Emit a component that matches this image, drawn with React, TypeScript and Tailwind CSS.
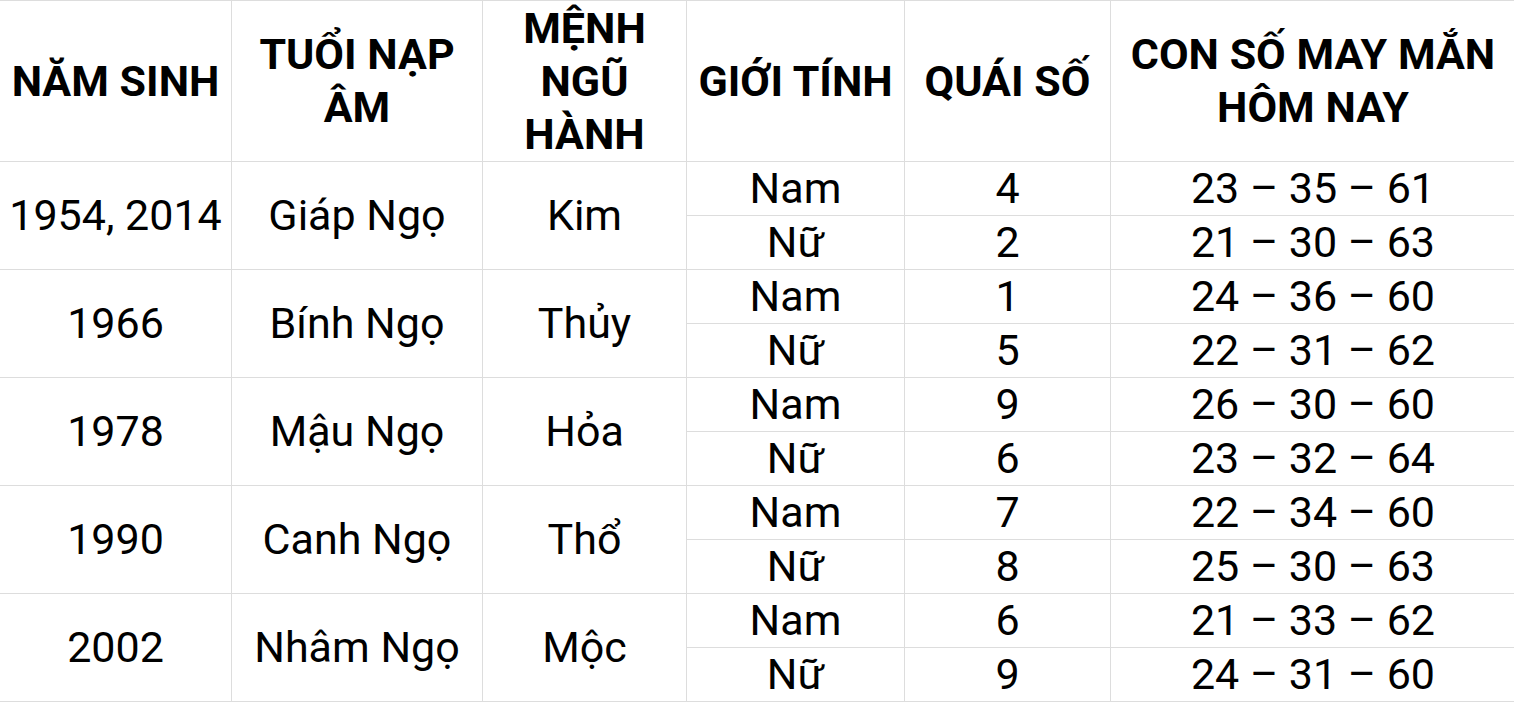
const rows = [
  { year: '1954, 2014', tuoi: 'Giáp Ngọ', menh: 'Kim', nam: ['4', '23 – 35 – 61'], nu: ['2', '21 – 30 – 63'] },
  { year: '1966', tuoi: 'Bính Ngọ', menh: 'Thủy', nam: ['1', '24 – 36 – 60'], nu: ['5', '22 – 31 – 62'] },
  { year: '1978', tuoi: 'Mậu Ngọ', menh: 'Hỏa', nam: ['9', '26 – 30 – 60'], nu: ['6', '23 – 32 – 64'] },
  { year: '1990', tuoi: 'Canh Ngọ', menh: 'Thổ', nam: ['7', '22 – 34 – 60'], nu: ['8', '25 – 30 – 63'] },
  { year: '2002', tuoi: 'Nhâm Ngọ', menh: 'Mộc', nam: ['6', '21 – 33 – 62'], nu: ['9', '24 – 31 – 60'] },
];

const th = 'border border-[#dddddd] px-1 py-0 font-bold text-center align-middle leading-[53px]';
const td = 'border border-[#dddddd] px-1 py-0 text-center align-middle h-[54px] leading-[53px]';

export default function App() {
  return (
    <div className="w-[1514px] h-[703px] overflow-hidden bg-white text-black" style={{ fontFamily: 'Roboto, sans-serif' }}>
      <table className="table-fixed border-collapse text-[43px] -ml-px w-[1516px]">
        <colgroup>
          <col className="w-[232px]" />
          <col className="w-[251px]" />
          <col className="w-[204px]" />
          <col className="w-[218px]" />
          <col className="w-[206px]" />
          <col className="w-[405px]" />
        </colgroup>
        <thead>
          <tr className="h-[161px]">
            <th className={th}>NĂM SINH</th>
            <th className={th}>TUỔI NẠP ÂM</th>
            <th className={th}>MỆNH NGŨ HÀNH</th>
            <th className={th}>GIỚI TÍNH</th>
            <th className={th}>QUÁI SỐ</th>
            <th className={th}>CON SỐ MAY MẮN HÔM NAY</th>
          </tr>
        </thead>
        <tbody>
          {rows.map((r) => (
            <>
              <tr key={r.year + 'a'}>
                <td rowSpan={2} className={td}>{r.year}</td>
                <td rowSpan={2} className={td}>{r.tuoi}</td>
                <td rowSpan={2} className={td}>{r.menh}</td>
                <td className={td}>Nam</td>
                <td className={td}>{r.nam[0]}</td>
                <td className={td}>{r.nam[1]}</td>
              </tr>
              <tr key={r.year + 'b'}>
                <td className={td}>Nữ</td>
                <td className={td}>{r.nu[0]}</td>
                <td className={td}>{r.nu[1]}</td>
              </tr>
            </>
          ))}
        </tbody>
      </table>
    </div>
  );
}
